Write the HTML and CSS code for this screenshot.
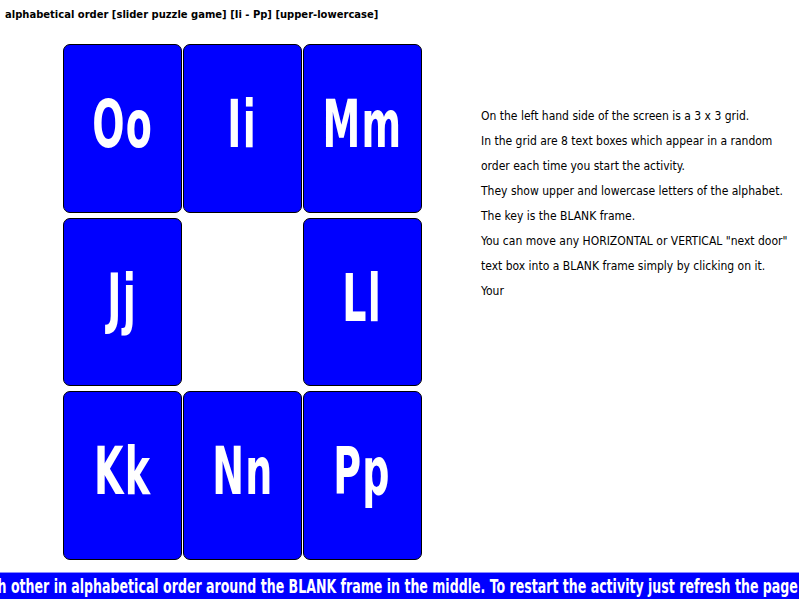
FILE: index.html
```html
<!DOCTYPE html>
<html>
<head>
<meta charset="utf-8">
<title>alphabetical order [slider puzzle game]</title>
<link rel="stylesheet" href="styles.css">
</head>
<body>
<div class="title">alphabetical order [slider puzzle game] [Ii - Pp] [upper-lowercase]</div>
<div class="main">
  <div class="grid">
    <div class="tile"><span class="glyph">Oo</span></div>
    <div class="tile"><span class="glyph">Ii</span></div>
    <div class="tile"><span class="glyph">Mm</span></div>
    <div class="tile"><span class="glyph">Jj</span></div>
    <div class="blank"></div>
    <div class="tile"><span class="glyph">Ll</span></div>
    <div class="tile"><span class="glyph">Kk</span></div>
    <div class="tile"><span class="glyph">Nn</span></div>
    <div class="tile"><span class="glyph">Pp</span></div>
  </div>
  <div class="info">
    <p>On the left hand side of the screen is a 3 x 3 grid.</p>
    <p>In the grid are 8 text boxes which appear in a random order each time you start the activity.</p>
    <p>They show upper and lowercase letters of the alphabet.</p>
    <p>The key is the BLANK frame.</p>
    <p>You can move any HORIZONTAL or VERTICAL "next door" text box into a BLANK frame simply by clicking on it.</p>
    <p>Your</p>
  </div>
</div>
<div class="marquee"><span class="marquee-text">h other in alphabetical order around the BLANK frame in the middle. To restart the activity just refresh the page</span></div>
</body>
</html>
```
FILE: styles.css
```css
html, body {
  margin: 0;
  padding: 0;
  background: #fff;
  width: 799px;
  height: 599px;
  overflow: hidden;
}
.title {
  font-family: "DejaVu Sans Condensed", "DejaVu Sans", sans-serif;
  font-weight: bold;
  font-size: 11.1px;
  line-height: 16px;
  padding: 7px 0 0 5px;
  height: 21px;
  color: #000;
}
.main {
  display: flex;
  align-items: flex-start;
  padding-left: 63px;
}
.grid {
  display: grid;
  grid-template-columns: repeat(3, 119px);
  grid-template-rows: 169px 168px 169px;
  column-gap: 1px;
  row-gap: 5px;
  margin-top: 16px;
}
.tile {
  box-sizing: border-box;
  background: #0000ff;
  border: 1px solid #000;
  border-radius: 7px;
  color: #fff;
  font-family: "DejaVu Sans Condensed", "Liberation Sans Narrow", sans-serif;
  font-weight: bold;
  font-size: 66px;
  display: flex;
  align-items: center;
  justify-content: center;
  padding-bottom: 8px;
}
.glyph {
  display: inline-block;
  transform: scaleX(0.64);
  letter-spacing: 2px;
}
.info {
  margin-left: 59px;
  margin-top: 76px;
  width: 318px;
  font-family: "DejaVu Sans Condensed", "Liberation Sans Narrow", sans-serif;
  font-size: 12px;
  line-height: 25px;
  color: #000;
}
.info p {
  margin: 0;
}
.marquee {
  margin-top: 12px;
  height: 27px;
  background: #0000ff;
  border-top: 1px solid #8a8aff;
  box-sizing: border-box;
  display: flex;
  justify-content: flex-end;
  align-items: center;
  overflow: hidden;
  white-space: nowrap;
}
.marquee-text {
  color: #fff;
  font-family: "DejaVu Sans Condensed", "Liberation Sans Narrow", sans-serif;
  font-weight: bold;
  font-size: 19px;
  padding-right: 2px;
  flex-shrink: 0;
  transform: scaleX(0.736);
  transform-origin: right center;
}
```
